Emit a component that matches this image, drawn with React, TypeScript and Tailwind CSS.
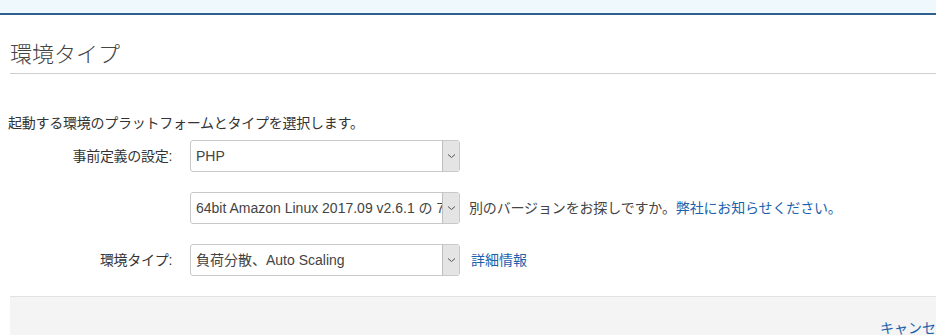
import React from "react";

const font = { fontFamily: '"Liberation Sans", "Noto Sans CJK JP", sans-serif' };

function Select({ text }: { text: string }) {
  return (
    <div className="relative flex h-[32px] w-[270px] items-center overflow-hidden rounded-[3px] border border-[#c8c8c8] bg-white">
      <span className="flex-1 overflow-hidden whitespace-nowrap pl-[5px] text-[14px] text-[#444]">{text}</span>
      <div className="absolute right-0 top-0 flex h-full w-[17px] items-center justify-center border-l border-[#bdbdbd] bg-[#e4e4e4]">
        <svg width="9" height="6" viewBox="0 0 9 6">
          <path d="M1 1.5 L4.5 4.5 L8 1.5" fill="none" stroke="#555" strokeWidth="1" />
        </svg>
      </div>
    </div>
  );
}

export default function App() {
  return (
    <div className="h-[335px] w-[936px] overflow-hidden bg-white text-[#333]" style={font}>
      <div className="h-[15px] border-b-2 border-[#2f5f8c] bg-[#eef8fd]" />
      <div className="pl-[10px]">
        <h2 className="mt-[26px] text-[22px] font-light leading-[28px] text-[#444]">環境タイプ</h2>
        <div className="mt-[4px] h-px bg-[#cfcfcf]" />
      </div>
      <p className="mt-[40px] pl-[8px] text-[14px] leading-[18px] tracking-[-0.25px] text-[#333]">
        起動する環境のプラットフォームとタイプを選択します。
      </p>
      <div className="mt-[8px] flex items-center">
        <label className="w-[175px] pr-[3px] text-right text-[14px] tracking-[-0.3px] text-[#333]">事前定義の設定:</label>
        <div className="ml-[15px]"><Select text="PHP" /></div>
      </div>
      <div className="mt-[20px] flex items-center">
        <div className="ml-[190px]"><Select text="64bit Amazon Linux 2017.09 v2.6.1 の 7" /></div>
        <span className="ml-[9px] text-[14px] tracking-[-0.15px] text-[#444]">
          別のバージョンをお探しですか。<span className="text-[#1b62ad]">弊社にお知らせください。</span>
        </span>
      </div>
      <div className="mt-[20px] flex items-center">
        <label className="w-[175px] pr-[3px] text-right text-[14px] tracking-[-0.3px] text-[#333]">環境タイプ:</label>
        <div className="ml-[15px]"><Select text="負荷分散、Auto Scaling" /></div>
        <span className="ml-[11px] text-[14px] text-[#1b62ad]">詳細情報</span>
      </div>
      <div className="ml-[10px] mt-[20px] h-[50px] overflow-hidden border-t border-[#e2e2e2] bg-[#f4f4f4]">
        <div className="flex justify-end pt-[21px]">
          <span className="mr-[-14px] whitespace-nowrap text-[14px] text-[#1b62ad]">キャンセル</span>
        </div>
      </div>
    </div>
  );
}
